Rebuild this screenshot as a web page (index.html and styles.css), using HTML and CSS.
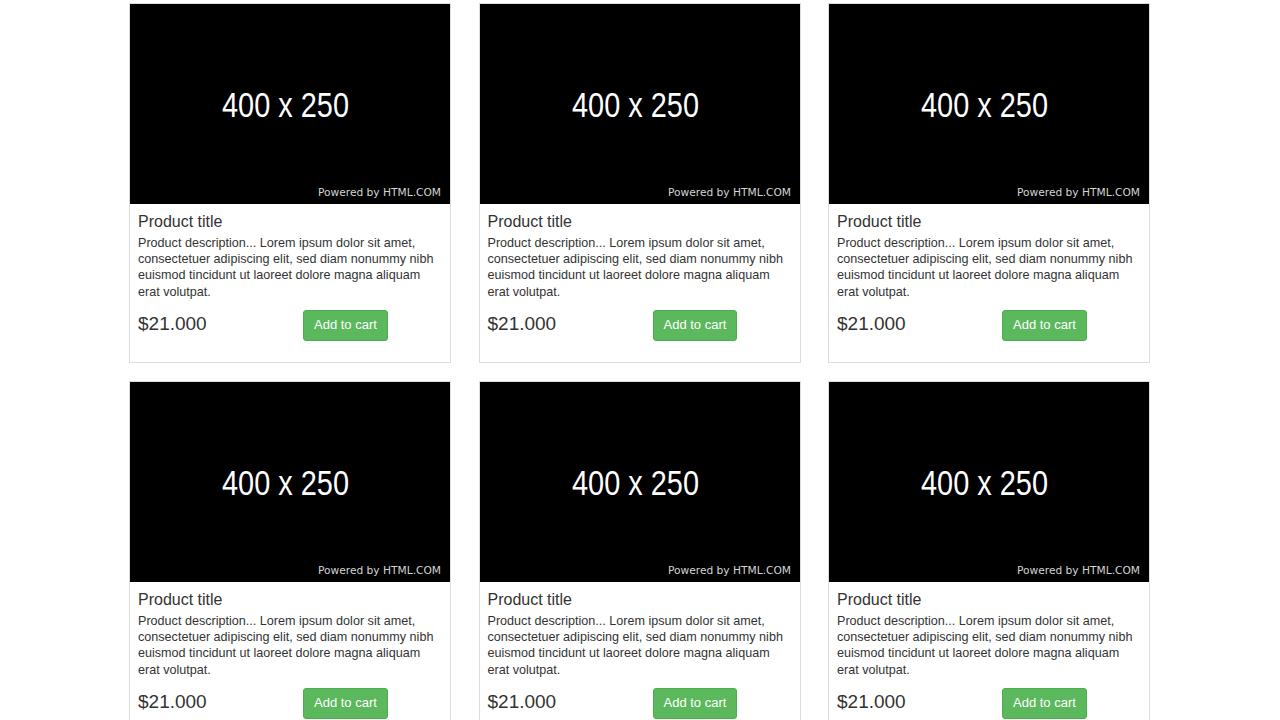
FILE: index.html
```html
<!DOCTYPE html>
<html lang="en">
<head>
<meta charset="utf-8">
<title>Products</title>
<link rel="stylesheet" href="styles.css">
</head>
<body>
<main class="products">
  <article class="card">
    <svg class="thumb" width="320" height="200" viewBox="0 0 320 200"><rect width="320" height="200" fill="#000"/><text class="ph-size" x="92" y="113" textLength="127" lengthAdjust="spacingAndGlyphs">400 x 250</text><text class="ph-credit" x="188" y="192" textLength="123" lengthAdjust="spacingAndGlyphs">Powered by HTML.COM</text></svg>
    <div class="caption">
      <h4 class="title">Product title</h4>
      <p class="desc">Product description... Lorem ipsum dolor sit amet, consectetuer adipiscing elit, sed diam nonummy nibh euismod tincidunt ut laoreet dolore magna aliquam erat volutpat.</p>
      <div class="buy"><span class="price">$21.000</span><button class="btn">Add to cart</button></div>
    </div>
  </article>
  <article class="card">
    <svg class="thumb" width="320" height="200" viewBox="0 0 320 200"><rect width="320" height="200" fill="#000"/><text class="ph-size" x="92" y="113" textLength="127" lengthAdjust="spacingAndGlyphs">400 x 250</text><text class="ph-credit" x="188" y="192" textLength="123" lengthAdjust="spacingAndGlyphs">Powered by HTML.COM</text></svg>
    <div class="caption">
      <h4 class="title">Product title</h4>
      <p class="desc">Product description... Lorem ipsum dolor sit amet, consectetuer adipiscing elit, sed diam nonummy nibh euismod tincidunt ut laoreet dolore magna aliquam erat volutpat.</p>
      <div class="buy"><span class="price">$21.000</span><button class="btn">Add to cart</button></div>
    </div>
  </article>
  <article class="card">
    <svg class="thumb" width="320" height="200" viewBox="0 0 320 200"><rect width="320" height="200" fill="#000"/><text class="ph-size" x="92" y="113" textLength="127" lengthAdjust="spacingAndGlyphs">400 x 250</text><text class="ph-credit" x="188" y="192" textLength="123" lengthAdjust="spacingAndGlyphs">Powered by HTML.COM</text></svg>
    <div class="caption">
      <h4 class="title">Product title</h4>
      <p class="desc">Product description... Lorem ipsum dolor sit amet, consectetuer adipiscing elit, sed diam nonummy nibh euismod tincidunt ut laoreet dolore magna aliquam erat volutpat.</p>
      <div class="buy"><span class="price">$21.000</span><button class="btn">Add to cart</button></div>
    </div>
  </article>
  <article class="card">
    <svg class="thumb" width="320" height="200" viewBox="0 0 320 200"><rect width="320" height="200" fill="#000"/><text class="ph-size" x="92" y="113" textLength="127" lengthAdjust="spacingAndGlyphs">400 x 250</text><text class="ph-credit" x="188" y="192" textLength="123" lengthAdjust="spacingAndGlyphs">Powered by HTML.COM</text></svg>
    <div class="caption">
      <h4 class="title">Product title</h4>
      <p class="desc">Product description... Lorem ipsum dolor sit amet, consectetuer adipiscing elit, sed diam nonummy nibh euismod tincidunt ut laoreet dolore magna aliquam erat volutpat.</p>
      <div class="buy"><span class="price">$21.000</span><button class="btn">Add to cart</button></div>
    </div>
  </article>
  <article class="card">
    <svg class="thumb" width="320" height="200" viewBox="0 0 320 200"><rect width="320" height="200" fill="#000"/><text class="ph-size" x="92" y="113" textLength="127" lengthAdjust="spacingAndGlyphs">400 x 250</text><text class="ph-credit" x="188" y="192" textLength="123" lengthAdjust="spacingAndGlyphs">Powered by HTML.COM</text></svg>
    <div class="caption">
      <h4 class="title">Product title</h4>
      <p class="desc">Product description... Lorem ipsum dolor sit amet, consectetuer adipiscing elit, sed diam nonummy nibh euismod tincidunt ut laoreet dolore magna aliquam erat volutpat.</p>
      <div class="buy"><span class="price">$21.000</span><button class="btn">Add to cart</button></div>
    </div>
  </article>
  <article class="card">
    <svg class="thumb" width="320" height="200" viewBox="0 0 320 200"><rect width="320" height="200" fill="#000"/><text class="ph-size" x="92" y="113" textLength="127" lengthAdjust="spacingAndGlyphs">400 x 250</text><text class="ph-credit" x="188" y="192" textLength="123" lengthAdjust="spacingAndGlyphs">Powered by HTML.COM</text></svg>
    <div class="caption">
      <h4 class="title">Product title</h4>
      <p class="desc">Product description... Lorem ipsum dolor sit amet, consectetuer adipiscing elit, sed diam nonummy nibh euismod tincidunt ut laoreet dolore magna aliquam erat volutpat.</p>
      <div class="buy"><span class="price">$21.000</span><button class="btn">Add to cart</button></div>
    </div>
  </article>
</main>
</body>
</html>
```

FILE: styles.css
```css
html, body {
  margin: 0;
  padding: 0;
  background: #fff;
}

body {
  font-family: "Liberation Sans", Arial, Helvetica, sans-serif;
  color: #333;
}

.products {
  display: grid;
  grid-template-columns: repeat(3, 322px);
  column-gap: 27.5px;
  row-gap: 18px;
  justify-content: center;
  padding: 3px 1px 0 0;
}

.card {
  border: 1px solid #ddd;
  background: #fff;
  display: flex;
  flex-direction: column;
}

.thumb {
  display: block;
  width: 320px;
  height: 200px;
}

.ph-size {
  font-family: "Liberation Sans", Arial, sans-serif;
  font-size: 35px;
  fill: #fff;
}

.ph-credit {
  font-family: "DejaVu Sans", Verdana, sans-serif;
  font-size: 11px;
  fill: #d4d4d4;
}

.caption {
  padding: 9px 9px 9px 8px;
}

.title {
  margin: 0 0 4px;
  font-size: 16px;
  font-weight: 400;
  line-height: 17.6px;
  color: #333;
}

.desc {
  margin: 0;
  font-size: 12.6px;
  line-height: 16.4px;
}

.buy {
  display: flex;
  align-items: flex-start;
  margin: 9.8px 0 12px;
}

.price {
  width: 165px;
  margin-top: 3.5px;
  font-size: 19px;
  line-height: 20.9px;
}

.btn {
  font-family: "Liberation Sans", Arial, sans-serif;
  font-size: 13px;
  line-height: 18px;
  padding: 5px 10px 6px;
  color: #fff;
  background: #5cb85c;
  border: 1px solid #4cae4c;
  border-radius: 3px;
  cursor: pointer;
}
```
